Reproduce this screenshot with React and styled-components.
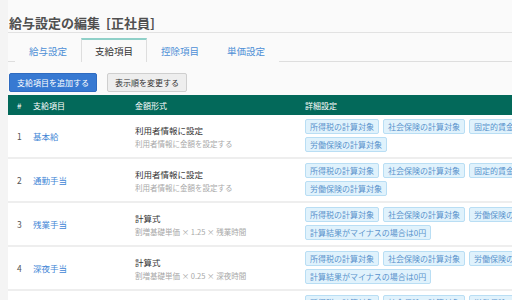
import React from "react"
import styled, { createGlobalStyle } from "styled-components"

const GlobalStyle = createGlobalStyle`
  html, body {
    margin: 0;
    padding: 0;
    background: #f4f4f4;
    overflow: hidden;
  }
  body {
    font-family: "Noto Sans CJK JP", "Noto Sans", sans-serif;
  }
`

const tabs = ["給与設定", "支給項目", "控除項目", "単価設定"]

const rows = [
  {
    no: 1,
    name: "基本給",
    type: "利用者情報に設定",
    note: "利用者情報に金額を設定する",
    tags: ["所得税の計算対象", "社会保険の計算対象", "固定的賃金の計算対象", "労働保険の計算対象"],
  },
  {
    no: 2,
    name: "通勤手当",
    type: "利用者情報に設定",
    note: "利用者情報に金額を設定する",
    tags: ["所得税の計算対象", "社会保険の計算対象", "固定的賃金の計算対象", "労働保険の計算対象"],
  },
  {
    no: 3,
    name: "残業手当",
    type: "計算式",
    note: "割増基礎単価 × 1.25 × 残業時間",
    tags: ["所得税の計算対象", "社会保険の計算対象", "労働保険の計算対象", "計算結果がマイナスの場合は0円"],
  },
  {
    no: 4,
    name: "深夜手当",
    type: "計算式",
    note: "割増基礎単価 × 0.25 × 深夜時間",
    tags: ["所得税の計算対象", "社会保険の計算対象", "労働保険の計算対象", "計算結果がマイナスの場合は0円"],
  },
  {
    no: 5,
    name: "休日手当",
    type: "計算式",
    note: "割増基礎単価 × 1.35 × 休日時間",
    tags: ["所得税の計算対象", "社会保険の計算対象", "労働保険の計算対象", "計算結果がマイナスの場合は0円"],
  },
]

const App = () => (
  <Page>
    <GlobalStyle />
    <Title>
      給与設定の編集<Gap />[正社員]
    </Title>
    <TabBar>
      {tabs.map((t) => (
        <Tab key={t} $active={t === "支給項目"}>
          {t}
        </Tab>
      ))}
    </TabBar>
    <Actions>
      <PrimaryButton>支給項目を追加する</PrimaryButton>
      <DefaultButton>表示順を変更する</DefaultButton>
    </Actions>
    <Table>
      <HeadRow>
        <span>#</span>
        <span>支給項目</span>
        <span>金額形式</span>
        <span>詳細設定</span>
      </HeadRow>
      {rows.map((r) => (
        <Row key={r.no}>
          <Num>{r.no}</Num>
          <Name>{r.name}</Name>
          <Amount>
            <AmountType>{r.type}</AmountType>
            <AmountNote>{r.note}</AmountNote>
          </Amount>
          <Tags>
            {r.tags.map((t) => (
              <Tag key={t}>{t}</Tag>
            ))}
          </Tags>
        </Row>
      ))}
    </Table>
  </Page>
)

export default App

const Page = styled.div`
  margin-left: 8px;
  width: 640px;
  background: #fafafa;
  padding-top: 14px;
  min-height: 300px;
`

const Title = styled.h1`
  margin: 0;
  padding-left: 1px;
  font-size: 13px;
  font-weight: 700;
  line-height: 18px;
  color: #505050;
  border-bottom: 1px solid #e2e2e2;
`

const Gap = styled.span`
  display: inline-block;
  width: 6px;
`

const TabBar = styled.div`
  display: flex;
  margin-top: 5px;
  padding-left: 7px;
  border-bottom: 1px solid #dedede;
`

const Tab = styled.div`
  width: 66px;
  height: 24px;
  box-sizing: border-box;
  display: flex;
  align-items: center;
  justify-content: center;
  font-size: 9.5px;
  color: ${(p) => (p.$active ? "#333" : "#4d8fd6")};
  border: 1px solid ${(p) => (p.$active ? "#dedede" : "transparent")};
  border-top: 2px solid ${(p) => (p.$active ? "#8fd0c8" : "transparent")};
  border-bottom: none;
  background: #fafafa;
  margin-bottom: -1px;
`

const Actions = styled.div`
  display: flex;
  gap: 10px;
  margin-top: 11px;
  margin-left: 1px;
`

const PrimaryButton = styled.button`
  height: 19px;
  padding: 0 7px;
  font-family: inherit;
  font-size: 8px;
  color: #fff;
  background: #3779d2;
  border: 1px solid #2f6bc0;
  border-radius: 2px;
`

const DefaultButton = styled(PrimaryButton)`
  color: #333;
  background: #eeeeee;
  border: 1px solid #cfcfcf;
`

const Table = styled.div`
  margin-top: 3px;
`

const grid = `
  display: grid;
  grid-template-columns: 16px 102px 170px 292px;
  padding-left: 9px;
`

const HeadRow = styled.div`
  ${grid}
  height: 20px;
  align-items: center;
  background: #03695a;
  color: #fff;
  font-size: 8px;
`

const Row = styled.div`
  ${grid}
  align-items: center;
  background: #fff;
  border-bottom: 2px solid #eeeeee;
  min-height: 42px;
`

const Num = styled.span`
  font-size: 8.5px;
  color: #555;
`

const Name = styled.span`
  font-size: 8.5px;
  color: #3f86d6;
`

const Amount = styled.div`
  display: flex;
  flex-direction: column;
  gap: 2px;
`

const AmountType = styled.span`
  font-size: 8.5px;
  color: #333;
`

const AmountNote = styled.span`
  font-size: 7.5px;
  color: #a8a8a8;
`

const Tags = styled.div`
  display: flex;
  flex-wrap: wrap;
  gap: 3px 4px;
  padding: 4px 0 5px;
`

const Tag = styled.span`
  height: 15px;
  box-sizing: border-box;
  padding: 0 4px;
  display: flex;
  align-items: center;
  font-size: 8px;
  color: #5a92cc;
  background: #e0f2fc;
  border: 1px solid #b9def4;
  border-radius: 2px;
  white-space: nowrap;
`
